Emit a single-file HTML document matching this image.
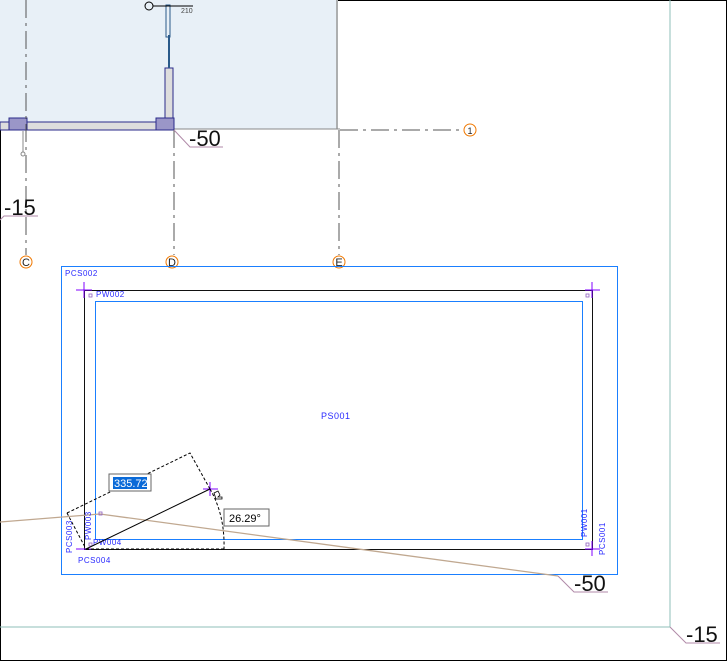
<!DOCTYPE html>
<html><head><style>
html,body{margin:0;padding:0;background:#fff;}
svg{display:block;font-family:"Liberation Sans",sans-serif;}
</style></head><body>
<svg width="727" height="661" viewBox="0 0 727 661" xmlns="http://www.w3.org/2000/svg">
<rect x="0.5" y="0.5" width="726" height="660" fill="#fff" stroke="#000"/>
<rect x="0" y="0" width="338" height="129" fill="#e8f0f7"/>
<line x1="337" y1="0" x2="337" y2="129" stroke="#999" stroke-width="1.5"/>
<line x1="174" y1="129" x2="340" y2="129" stroke="#888"/>
<rect x="0" y="122" width="174" height="8" fill="#ddd" stroke="#2a2a8a"/>
<rect x="9" y="118" width="18" height="12" fill="#9a96c8" stroke="#2a2a8a"/>
<rect x="156" y="118" width="18" height="12" fill="#9a96c8" stroke="#2a2a8a"/>
<rect x="165" y="68" width="8" height="50" fill="#ddd" stroke="#2a2a8a"/>
<line x1="169" y1="35" x2="169" y2="68" stroke="#2a5a8a" stroke-width="2"/>
<rect x="166" y="5" width="4" height="32" fill="none" stroke="#2a5a8a"/>
<circle cx="149" cy="6" r="4" fill="none" stroke="#000"/>
<line x1="153" y1="6" x2="193" y2="6" stroke="#000"/>
<text x="181" y="13" font-size="7" fill="#444">210</text>
<line x1="23" y1="131" x2="23" y2="152" stroke="#888"/>
<circle cx="23" cy="154" r="2" fill="none" stroke="#888"/>
<g stroke="#555" stroke-dasharray="18,5,3,5" fill="none">
<line x1="26" y1="0" x2="26" y2="255"/>
<line x1="174" y1="130" x2="174" y2="255"/>
<line x1="339" y1="130" x2="339" y2="255"/>
<line x1="340" y1="130" x2="462" y2="130"/>
</g>
<g fill="none" stroke="#f07800">
<circle cx="26" cy="262" r="6"/><circle cx="172" cy="262" r="6"/><circle cx="339" cy="262" r="6"/><circle cx="470" cy="130" r="6"/>
</g>
<g font-size="11" fill="#222" text-anchor="middle">
<text x="26" y="266">C</text><text x="172" y="266">D</text><text x="339" y="266">E</text><text x="470" y="134" font-size="9">1</text>
</g>
<polyline points="174,130 190,147 223,147" fill="none" stroke="#b08aa8"/>
<text x="189" y="146" font-size="22" fill="#111">-50</text>
<polyline points="0,220 4,216 38,216" fill="none" stroke="#b08aa8"/>
<text x="4" y="215" font-size="22" fill="#111">-15</text>
<line x1="670" y1="0" x2="670" y2="627" stroke="#8fbfb8"/>
<line x1="0" y1="627" x2="670" y2="627" stroke="#8fbfb8"/>
<polyline points="670,627 686,643 720,643" fill="none" stroke="#b08aa8"/>
<text x="686" y="642" font-size="22" fill="#111">-15</text>
<rect x="61.5" y="266.5" width="556" height="308" fill="none" stroke="#1a7fff"/>
<rect x="84.5" y="290.5" width="508" height="259" fill="none" stroke="#111"/>
<rect x="95.5" y="301.5" width="487" height="238" fill="none" stroke="#1a7fff"/>
<path d="M0,522 L100,514 L558,576" fill="none" stroke="#c0a890" stroke-width="1.3"/>
<rect x="99" y="512" width="3" height="3" fill="none" stroke="#9060c0" stroke-width="0.8"/>
<polyline points="558,576 574,592 608,592" fill="none" stroke="#b08aa8"/>
<text x="574" y="591" font-size="22" fill="#111">-50</text>
<g stroke="#8000ff">
<line x1="76" y1="290" x2="92" y2="290"/><line x1="84" y1="282" x2="84" y2="298"/>
<line x1="585" y1="290" x2="600" y2="290"/><line x1="592" y1="282" x2="592" y2="298"/>
<line x1="585" y1="549" x2="600" y2="549"/><line x1="592" y1="541" x2="592" y2="556"/>
<line x1="76" y1="549" x2="92" y2="549"/>
<line x1="203" y1="489" x2="218" y2="489"/><line x1="210" y1="482" x2="210" y2="496"/>
</g>
<g fill="none" stroke="#9060c0" stroke-width="0.8">
<rect x="89" y="294" width="3" height="3"/><rect x="586" y="294" width="3" height="3"/><rect x="586" y="543" width="3" height="3"/><rect x="89" y="543" width="3" height="3"/>
</g>
<g font-size="8" fill="#2a2aff" letter-spacing="0.5">
<text x="65" y="276">PCS002</text>
<text x="96" y="297">PW002</text>
<text x="321" y="419" font-size="9">PS001</text>
<text x="93" y="545">PW004</text>
<text x="78" y="563">PCS004</text>
<text transform="translate(72,553) rotate(-90)">PCS003</text>
<text transform="translate(91,540) rotate(-90)">PW003</text>
<text transform="translate(587,537) rotate(-90)">PW001</text>
<text transform="translate(605,555) rotate(-90)">PCS001</text>
</g>
<g fill="none" stroke="#000" stroke-dasharray="3,2">
<polyline points="67,513 190,453 210,489"/>
<line x1="67" y1="513" x2="86" y2="549"/>
<line x1="86" y1="549" x2="225" y2="549"/>
<path d="M210,489 Q225,515 224,549"/>
</g>
<line x1="86" y1="549" x2="210" y2="489" stroke="#000"/>
<rect x="109" y="474" width="42" height="17" fill="#fff" stroke="#666"/>
<rect x="113" y="477" width="34" height="12" fill="#0a6ad8"/>
<text x="114" y="487" font-size="11" fill="#fff">335.72</text>
<rect x="224" y="509" width="45" height="17" fill="#fff" stroke="#666"/>
<text x="229" y="522" font-size="11" fill="#000">26.29°</text>
<path d="M214,493 l4,-2 l2,4 l-2,2 h4 v2 h-6z" fill="#fff" stroke="#000" stroke-width="0.8"/>
</svg>
</body></html>
